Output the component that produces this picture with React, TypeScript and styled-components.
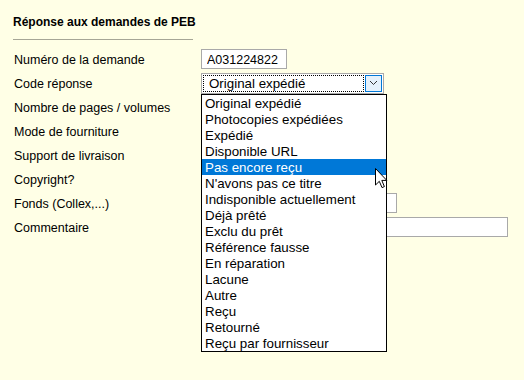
import styled, { createGlobalStyle } from "styled-components";

const options = [
  "Original expédié",
  "Photocopies expédiées",
  "Expédié",
  "Disponible URL",
  "Pas encore reçu",
  "N'avons pas ce titre",
  "Indisponible actuellement",
  "Déjà prêté",
  "Exclu du prêt",
  "Référence fausse",
  "En réparation",
  "Lacune",
  "Autre",
  "Reçu",
  "Retourné",
  "Reçu par fournisseur",
];

const hovered = 4;

export default function App() {
  return (
    <>
      <GlobalStyle />
      <Page>
        <Title>Réponse aux demandes de PEB</Title>
        <Rule />
        <Form>
          <Label>Numéro de la demande</Label>
          <Field>
            <TextInput $width={86} defaultValue="A031224822" readOnly />
          </Field>

          <Label>Code réponse</Label>
          <Field>
            <Select>
              <SelectValue>Original expédié</SelectValue>
              <ArrowButton>
                <svg width="9" height="6" viewBox="0 0 9 6">
                  <path d="M1 1 L4.5 4.5 L8 1" fill="none" stroke="#333" strokeWidth="1" />
                </svg>
              </ArrowButton>
              <OptionList>
                {options.map((o, i) => (
                  <Option key={o} $active={i === hovered}>
                    {o}
                  </Option>
                ))}
              </OptionList>
            </Select>
          </Field>

          <Label>Nombre de pages / volumes</Label>
          <Field>
            <TextInput $width={50} readOnly />
          </Field>

          <Label>Mode de fourniture</Label>
          <Field>
            <TextInput $width={150} readOnly />
          </Field>

          <Label>Support de livraison</Label>
          <Field>
            <TextInput $width={150} readOnly />
          </Field>

          <Label>Copyright?</Label>
          <Field>
            <TextInput $width={60} readOnly />
          </Field>

          <Label>Fonds (Collex,...)</Label>
          <Field>
            <TextInput $width={196} readOnly />
          </Field>

          <Label>Commentaire</Label>
          <Field>
            <TextInput $width={307} readOnly />
          </Field>
        </Form>

        <Cursor width="13" height="21" viewBox="0 0 13 21">
          <path
            d="M0.5 0.5 L0.5 17 L4.3 13.3 L7 19.6 L9.4 18.6 L6.8 12.4 L11.8 12.4 Z"
            fill="#fff"
            stroke="#000"
            strokeWidth="1"
          />
        </Cursor>
      </Page>
    </>
  );
}

const GlobalStyle = createGlobalStyle`
  html, body {
    margin: 0;
    background: #ffffe6;
  }
  body {
    font-family: "Liberation Sans", Arial, sans-serif;
    color: #000;
  }
`;

const Page = styled.div`
  position: relative;
  width: 524px;
  height: 380px;
  padding: 15px 0 0 13px;
  box-sizing: border-box;
  overflow: hidden;
`;

const Title = styled.h1`
  margin: 0;
  font-size: 12px;
  line-height: 14px;
  font-weight: bold;
`;

const Rule = styled.div`
  width: 180px;
  height: 1px;
  margin-top: 10px;
  background: #a6a696;
`;

const Form = styled.div`
  display: grid;
  grid-template-columns: 188px auto;
  grid-auto-rows: 20px;
  row-gap: 4px;
  margin-top: 9px;
`;

const Label = styled.div`
  padding: 1px 0 0 1px;
  font-size: 12.5px;
  line-height: 20px;
  white-space: nowrap;
`;

const Field = styled.div`
  display: flex;
  align-items: center;
`;

const TextInput = styled.input<{ $width: number }>`
  width: ${(p) => p.$width}px;
  height: 20px;
  box-sizing: border-box;
  border: 1px solid #a9a9a9;
  background: #fff;
  padding: 1px 5px 0;
  font-family: "Liberation Sans", Arial, sans-serif;
  font-size: 12.5px;
  color: #000;
  outline: none;
`;

const Select = styled.div`
  position: relative;
  width: 183px;
  height: 21px;
  box-sizing: border-box;
  border: 1px solid #a9a9a9;
  background: #fff;
  display: flex;
  align-items: center;
  padding: 1px;
`;

const SelectValue = styled.div`
  flex: 1;
  height: 17px;
  box-sizing: border-box;
  border: 1px dotted #000;
  padding-left: 5px;
  font-size: 13.33px;
  line-height: 16px;
  margin-right: 1px;
`;

const ArrowButton = styled.div`
  width: 17px;
  height: 17px;
  box-sizing: border-box;
  border: 1px solid #0078d7;
  background: #e5f1fb;
  display: flex;
  align-items: center;
  justify-content: center;
`;

const OptionList = styled.div`
  position: absolute;
  top: 20px;
  left: -1px;
  width: 186px;
  box-sizing: border-box;
  border: 1px solid #000;
  background: #fff;
  z-index: 10;
`;

const Option = styled.div<{ $active?: boolean }>`
  height: 16px;
  box-sizing: border-box;
  padding: 1px 0 0 3px;
  line-height: 15px;
  font-size: 13.33px;
  white-space: nowrap;
  background: ${(p) => (p.$active ? "#0078d7" : "transparent")};
  color: ${(p) => (p.$active ? "#fff" : "#000")};
`;

const Cursor = styled.svg`
  position: absolute;
  left: 375px;
  top: 168px;
  z-index: 20;
`;
